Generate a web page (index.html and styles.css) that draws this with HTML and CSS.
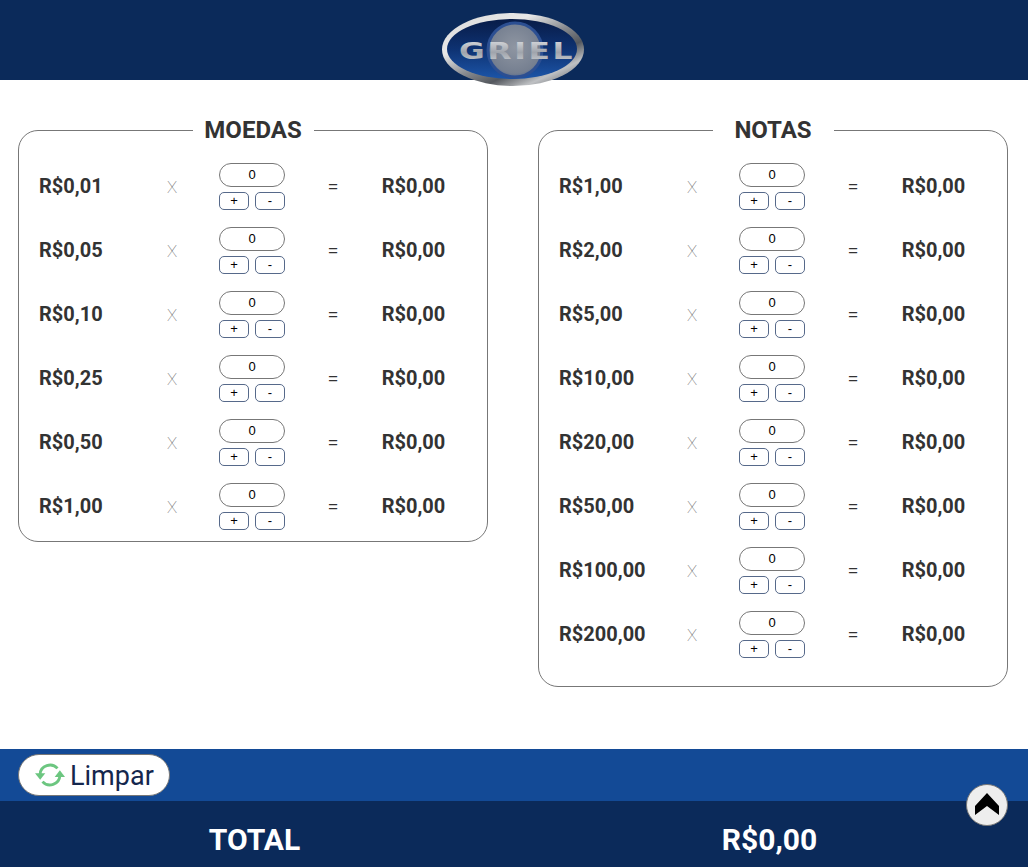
FILE: index.html
```html
<!DOCTYPE html>
<html lang="en">
<head>
    <meta charset="UTF-8">
    <meta name="viewport" content="width=device-width, initial-scale=1.0">
    <title>Griel</title>
    <link rel="stylesheet" href="styles.css">
</head>
<body>

    <header class="topbar">
        <svg class="logo" width="144" height="76" viewBox="0 0 144 76">
            <defs>
                <linearGradient id="ring" x1="0" y1="0.1" x2="0.8" y2="1">
                    <stop offset="0" stop-color="#dcdcdc"/>
                    <stop offset="0.3" stop-color="#e8e8e8"/>
                    <stop offset="0.55" stop-color="#85888d"/>
                    <stop offset="0.72" stop-color="#54585e"/>
                    <stop offset="0.88" stop-color="#bfc1c4"/>
                    <stop offset="1" stop-color="#7c7f83"/>
                </linearGradient>
                <linearGradient id="inner" x1="0" y1="0" x2="0" y2="1">
                    <stop offset="0" stop-color="#081c48"/>
                    <stop offset="0.5" stop-color="#0e3272"/>
                    <stop offset="1" stop-color="#1c55a8"/>
                </linearGradient>
                <radialGradient id="ball" cx="0.5" cy="0.45" r="0.6">
                    <stop offset="0" stop-color="#8f96a2"/>
                    <stop offset="0.8" stop-color="#757f90"/>
                    <stop offset="1" stop-color="#46608f"/>
                </radialGradient>
                <linearGradient id="letters" x1="0" y1="0" x2="0" y2="1">
                    <stop offset="0" stop-color="#dfe1e4"/>
                    <stop offset="0.55" stop-color="#9fa4ac"/>
                    <stop offset="1" stop-color="#cdd0d4"/>
                </linearGradient>
            </defs>
            <ellipse cx="71" cy="37.5" rx="71" ry="36.5" fill="url(#ring)"/>
            <ellipse cx="70" cy="37" rx="65" ry="30" fill="url(#inner)"/>
            <circle cx="73" cy="38" r="27" fill="url(#ball)" stroke="#2c4f92" stroke-width="3"/>
            <text class="logo-text" transform="translate(17 47) scale(1.36 1)" fill="url(#letters)">GRIEL</text>
        </svg>
    </header>

    <main class="panels">
        <fieldset class="panel">
            <legend>MOEDAS</legend>

            <div class="row">
                <span class="value">R$0,01</span><span class="times">X</span>
                <div class="qty"><input type="text" value="0"><button>+</button><button>-</button></div>
                <span class="equals">=</span><span class="value result">R$0,00</span>
            </div>
            <div class="row">
                <span class="value">R$0,05</span><span class="times">X</span>
                <div class="qty"><input type="text" value="0"><button>+</button><button>-</button></div>
                <span class="equals">=</span><span class="value result">R$0,00</span>
            </div>
            <div class="row">
                <span class="value">R$0,10</span><span class="times">X</span>
                <div class="qty"><input type="text" value="0"><button>+</button><button>-</button></div>
                <span class="equals">=</span><span class="value result">R$0,00</span>
            </div>
            <div class="row">
                <span class="value">R$0,25</span><span class="times">X</span>
                <div class="qty"><input type="text" value="0"><button>+</button><button>-</button></div>
                <span class="equals">=</span><span class="value result">R$0,00</span>
            </div>
            <div class="row">
                <span class="value">R$0,50</span><span class="times">X</span>
                <div class="qty"><input type="text" value="0"><button>+</button><button>-</button></div>
                <span class="equals">=</span><span class="value result">R$0,00</span>
            </div>
            <div class="row">
                <span class="value">R$1,00</span><span class="times">X</span>
                <div class="qty"><input type="text" value="0"><button>+</button><button>-</button></div>
                <span class="equals">=</span><span class="value result">R$0,00</span>
            </div>
        </fieldset>

        <fieldset class="panel panel-notes">
            <legend>NOTAS</legend>

            <div class="row">
                <span class="value">R$1,00</span><span class="times">X</span>
                <div class="qty"><input type="text" value="0"><button>+</button><button>-</button></div>
                <span class="equals">=</span><span class="value result">R$0,00</span>
            </div>
            <div class="row">
                <span class="value">R$2,00</span><span class="times">X</span>
                <div class="qty"><input type="text" value="0"><button>+</button><button>-</button></div>
                <span class="equals">=</span><span class="value result">R$0,00</span>
            </div>
            <div class="row">
                <span class="value">R$5,00</span><span class="times">X</span>
                <div class="qty"><input type="text" value="0"><button>+</button><button>-</button></div>
                <span class="equals">=</span><span class="value result">R$0,00</span>
            </div>
            <div class="row">
                <span class="value">R$10,00</span><span class="times">X</span>
                <div class="qty"><input type="text" value="0"><button>+</button><button>-</button></div>
                <span class="equals">=</span><span class="value result">R$0,00</span>
            </div>
            <div class="row">
                <span class="value">R$20,00</span><span class="times">X</span>
                <div class="qty"><input type="text" value="0"><button>+</button><button>-</button></div>
                <span class="equals">=</span><span class="value result">R$0,00</span>
            </div>
            <div class="row">
                <span class="value">R$50,00</span><span class="times">X</span>
                <div class="qty"><input type="text" value="0"><button>+</button><button>-</button></div>
                <span class="equals">=</span><span class="value result">R$0,00</span>
            </div>
            <div class="row">
                <span class="value">R$100,00</span><span class="times">X</span>
                <div class="qty"><input type="text" value="0"><button>+</button><button>-</button></div>
                <span class="equals">=</span><span class="value result">R$0,00</span>
            </div>
            <div class="row">
                <span class="value">R$200,00</span><span class="times">X</span>
                <div class="qty"><input type="text" value="0"><button>+</button><button>-</button></div>
                <span class="equals">=</span><span class="value result">R$0,00</span>
            </div>
        </fieldset>
    </main>

    <footer class="bottom">
        <div class="actions">
            <button class="clear-btn">
                <svg width="30" height="26" viewBox="0 0 32 26">
                    <path d="M5.5 12 A10.5 10 0 0 1 24 6" fill="none" stroke="#6cc680" stroke-width="3"/>
                    <path d="M0 11 H11 L5.5 18 Z" fill="#6cc680"/>
                    <path d="M26.5 14 A10.5 10 0 0 1 8 20" fill="none" stroke="#6cc680" stroke-width="3"/>
                    <path d="M21 15 H32 L26.5 8 Z" fill="#6cc680"/>
                </svg>
                <span class="clear-label">Limpar</span>
            </button>
        </div>
        <div class="total">
            <span>TOTAL</span>
            <span>R$0,00</span>
        </div>
        <button class="to-top">
            <svg width="26" height="26" viewBox="0 0 26 26">
                <path d="M13 1 L25 14 V23 L13 14 L1 23 V14 Z" fill="#000"/>
            </svg>
        </button>
    </footer>

</body>
</html>
```

FILE: styles.css
```css
* {
    box-sizing: border-box;
}

body {
    font-family: Roboto, Arial, sans-serif;
    background-color: #fff;
    color: #333;
    margin: 0;
    padding: 0;
    height: 867px;
    display: flex;
    flex-direction: column;
    overflow: hidden;
}

.topbar {
    height: 80px;
    flex: none;
    background-color: #0b2a5a;
    display: flex;
    justify-content: center;
    align-items: flex-start;
    padding-top: 12px;
}

.logo {
    flex: none;
    position: relative;
    z-index: 1;
}

.logo-text {
    font-family: "DejaVu Sans", Arial, sans-serif;
    font-size: 23px;
    font-weight: bold;
    letter-spacing: 2px;
}

.panels {
    flex: 1;
    display: grid;
    grid-template-columns: 470px 470px;
    justify-content: space-between;
    align-items: start;
    padding: 35px 20px 0 18px;
}

.panel {
    margin: 0;
    padding: 0 0 3px 0;
    border: 1px solid #777;
    border-radius: 20px;
    min-width: 0;
}

.panel-notes {
    padding-bottom: 20px;
}

.panel legend {
    width: 121px;
    margin: 0 auto;
    padding: 0;
    text-align: center;
    font-size: 24px;
    font-weight: 700;
    line-height: 30px;
    color: #333;
}

.row {
    display: grid;
    grid-template-columns: 113px 40px 120px 42px 119px;
    align-items: center;
    height: 64px;
    padding-left: 20px;
}

.row:first-of-type {
    margin-top: 9px;
}

.value {
    font-size: 20px;
    font-weight: 700;
    color: #333;
}

.result {
    text-align: center;
}

.times,
.equals {
    text-align: center;
}

.times {
    padding-top: 2px;
    font-size: 17px;
    font-weight: 100;
    color: #666;
}

.equals {
    font-size: 20px;
    font-weight: 300;
    color: #333;
}

.qty {
    width: 66px;
    justify-self: center;
    display: grid;
    grid-template-columns: 30px 30px;
    justify-content: space-between;
    row-gap: 5px;
}

.qty input {
    grid-column: 1 / 3;
    width: 66px;
    height: 24px;
    padding: 0;
    border: 1px solid #777;
    border-radius: 12px;
    text-align: center;
    font-family: "Liberation Sans", Arial, sans-serif;
    font-size: 13px;
    color: #000;
}

.qty button {
    height: 18px;
    padding: 0;
    background-color: #fff;
    border: 1px solid #56698a;
    border-radius: 5px;
    font-family: "Liberation Sans", Arial, sans-serif;
    font-size: 13px;
    line-height: 14px;
    color: #000;
}

.bottom {
    flex: none;
    position: relative;
}

.actions {
    height: 52px;
    background-color: #134a96;
    padding: 5px 18px;
}

.clear-btn {
    height: 42px;
    width: 152px;
    display: flex;
    align-items: center;
    gap: 5px;
    padding: 0 0 0 16px;
    background-color: #fff;
    border: 1px solid #777;
    border-radius: 21px;
    font-family: Roboto, Arial, sans-serif;
    font-size: 27px;
    color: #14264d;
}

.clear-label {
    padding-top: 2px;
}

.total {
    height: 66px;
    background-color: #0b2a5a;
    display: grid;
    grid-template-columns: 509px 1fr;
    column-gap: 2px;
    align-items: center;
    justify-items: center;
    color: #fff;
    font-size: 30px;
    font-weight: 700;
    padding-top: 10px;
}

.to-top {
    position: absolute;
    right: 20px;
    top: 35px;
    width: 42px;
    height: 42px;
    padding: 0;
    display: flex;
    align-items: center;
    justify-content: center;
    background-color: #eee;
    border: 1px solid #777;
    border-radius: 50%;
}
```
